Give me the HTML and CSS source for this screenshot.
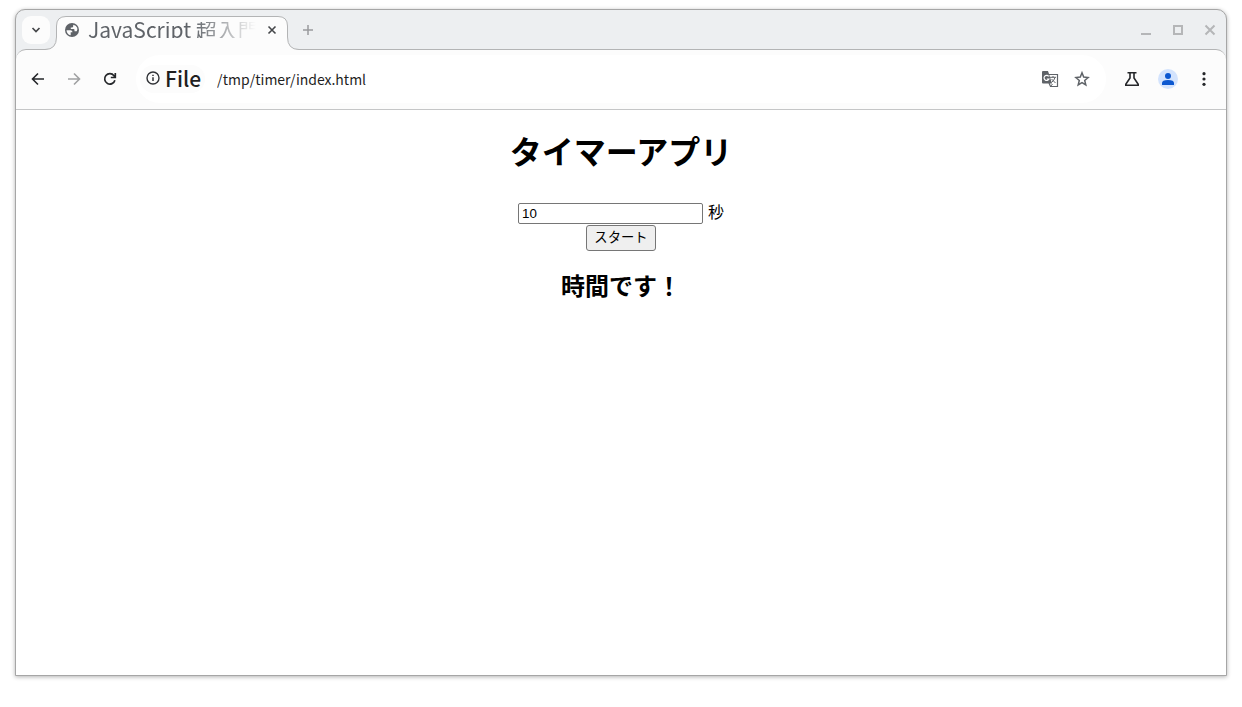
FILE: index.html
```html
<!DOCTYPE html>
<html lang="ja">
<head>
<meta charset="utf-8">
<title>JavaScript 超入門</title>
<link rel="stylesheet" href="styles.css">
</head>
<body>
<div class="window">
  <header class="tabstrip">
    <button class="tab-search" type="button" aria-label="タブを検索">
      <svg width="10" height="8" viewBox="0 0 10 8"><path d="M1.500 2 5 5.500 8.500 2" fill="none" stroke="#45474a" stroke-width="1.700"/></svg>
    </button>
    <div class="tab">
      <svg class="tab-shape" width="256" height="35" viewBox="0 0 256 35"><path d="M0 35V33.500H1Q12.500 33.500 12.500 21V10Q12.500 .5 22 .5H234Q243.500 .5 243.500 10V21Q243.500 33.500 255 33.500H256V35Z" fill="#fcfcfc"/><path d="M0 33.500H1Q12.500 33.500 12.500 21V10Q12.500 .5 22 .5H234Q243.500 .5 243.500 10V21Q243.500 33.500 255 33.500H256" fill="none" stroke="#b3b4b5"/></svg>
      <svg class="globe" width="16" height="16" viewBox="0 0 16 16"><circle cx="8" cy="8" r="7" fill="#5f6368"/><path d="M2.500 8.200H6.500Q8.500 8.200 8.500 10.200H6.700V13.300Q2.700 12.300 2.500 8.200ZM9.200 2.700V4.200Q9.200 5.500 7.800 5.500H6.800V7H9.600Q10.500 7 10.500 8V9.300H12.700Q13.800 7.500 13.200 5.700Q12.200 3.300 9.200 2.700Z" fill="#fcfcfc"/></svg>
      <span class="tab-title">JavaScript 超入門</span>
      <button class="tab-close" type="button" aria-label="タブを閉じる">
        <svg width="10" height="10" viewBox="0 0 10 10"><path d="m1.500 1.500 7 7m0-7-7 7" stroke="#45474a" stroke-width="1.600"/></svg>
      </button>
    </div>
    <button class="new-tab" type="button" aria-label="新しいタブ">
      <svg width="12" height="12" viewBox="0 0 12 12"><path d="M6 1v10M1 6h10" stroke="#999b9d" stroke-width="1.500"/></svg>
    </button>
    <div class="window-controls">
      <button type="button" aria-label="最小化"><svg width="12" height="12" viewBox="0 0 12 12"><path d="M1 10h10" stroke="#b5b6b8" stroke-width="2"/></svg></button>
      <button type="button" aria-label="最大化"><svg width="12" height="12" viewBox="0 0 12 12"><path d="M2 2h8v8H2z" fill="none" stroke="#b5b6b8" stroke-width="2"/></svg></button>
      <button type="button" aria-label="閉じる"><svg width="12" height="12" viewBox="0 0 12 12"><path d="m1.500 1.500 9 9m0-9-9 9" stroke="#b5b6b8" stroke-width="2"/></svg></button>
    </div>
  </header>
  <nav class="toolbar">
    <div class="nav-buttons">
      <button type="button" aria-label="戻る"><svg width="16" height="16" viewBox="0 0 16 16"><path d="M14 8H3M8 2.500 2.500 8 8 13.500" fill="none" stroke="#25272a" stroke-width="1.600"/></svg></button>
      <button type="button" aria-label="進む"><svg width="16" height="16" viewBox="0 0 16 16"><path d="M2 8h11M8 2.500 13.500 8 8 13.500" fill="none" stroke="#a0a1a2" stroke-width="1.600"/></svg></button>
      <button type="button" aria-label="再読み込み"><svg width="16" height="16" viewBox="0 0 16 16"><path d="M12.900 9.200A5.200 5.200 0 1 1 12 4.700L13.300 6.200M13.300 2v4.500H8.800" fill="none" stroke="#25272a" stroke-width="1.700"/></svg></button>
    </div>
    <div class="address-bar">
      <button class="site-info" type="button">
        <svg width="16" height="16" viewBox="0 0 16 16"><circle cx="8" cy="8" r="6" fill="none" stroke="#303236" stroke-width="1.400"/><path d="M8 7.200V11M8 4.700v1.400" stroke="#303236" stroke-width="1.500"/></svg>
        <span>File</span>
      </button>
      <input class="url" type="text" value="/tmp/timer/index.html" aria-label="アドレス">
      <button type="button" aria-label="翻訳"><svg width="18" height="18" viewBox="0 0 18 18"><path d="M7.500 4.500h9v12H9.500L8 13" fill="#fff" stroke="#5f6368" stroke-width="1.200"/><path d="M2 1h5l1 3 3 9.500H2a1 1 0 0 1-1-1V2a1 1 0 0 1 1-1Z" fill="#5f6368"/><path d="M7.700 6.300A2.600 2.600 0 1 0 8 9H5.800" fill="none" stroke="#fff" stroke-width="1.200"/><path d="M9 7.300h6M12 6v1.300M14 7.500q-.8 3-3.500 5M10.500 9l4 4M9.500 16.500l2-2.500" fill="none" stroke="#5f6368" stroke-width="1"/></svg></button>
      <button type="button" aria-label="ブックマーク"><svg width="18" height="18" viewBox="0 0 18 18"><path d="m9 2.800 1.700 4.300 4.400.4-3.400 3 1.100 4.400L9 12.600l-3.800 2.300 1.100-4.400-3.400-3 4.400-.4Z" fill="none" stroke="#5f6368" stroke-width="1.500"/></svg></button>
    </div>
    <div class="actions">
      <button type="button" aria-label="試験運用機能"><svg width="16" height="16" viewBox="0 0 16 16"><path d="M3.500 1.800h9M6 2v5L1.800 13.200v1h12.400v-1L10 7V2" fill="none" stroke="#25272a" stroke-width="1.600"/></svg></button>
      <button type="button" aria-label="プロフィール"><svg width="20" height="20" viewBox="0 0 20 20"><circle cx="10" cy="10" r="10" fill="#d3e3fd"/><circle cx="10" cy="7" r="3" fill="#0b57d0"/><path d="M4 16v-2q0-3 6-3t6 3v2Z" fill="#0b57d0"/></svg></button>
      <button type="button" aria-label="メニュー"><svg width="16" height="16" viewBox="0 0 16 16" fill="#25272a"><circle cx="8" cy="2.700" r="1.600"/><circle cx="8" cy="8" r="1.600"/><circle cx="8" cy="13.300" r="1.600"/></svg></button>
    </div>
  </nav>
  <main class="page">
    <h1>タイマーアプリ</h1>
    <form class="timer">
      <div class="field"><input class="seconds" id="seconds" type="text" value="10"><label for="seconds">秒</label></div>
      <button class="start" type="button">スタート</button>
    </form>
    <h2>時間です！</h2>
  </main>
</div>
</body>
</html>
```
FILE: styles.css
```css
* {
  box-sizing: border-box;
}

body {
  margin: 0;
  min-height: 100vh;
  padding: 9px 15px 31px;
  display: flex;
  background: #fff;
  color: #000;
  font-family: "Noto Sans CJK JP", sans-serif;
}

svg {
  display: block;
  flex: none;
}

.window {
  flex: 1;
  min-width: 0;
  display: flex;
  flex-direction: column;
  background: #edeff1;
  border: 1px solid #a6a6a6;
  border-radius: 10px 10px 0 0;
  box-shadow: 0 1px 4px rgba(0, 0, 0, 0.3);
}

.tabstrip button,
.toolbar button {
  display: flex;
  align-items: center;
  justify-content: center;
  border: 0;
  padding: 0;
  background: none;
  font-family: inherit;
}

.tabstrip {
  height: 39px;
  display: flex;
  align-items: center;
  padding: 0 6px;
}

.tabstrip .tab-search {
  width: 28px;
  height: 28px;
  border-radius: 9px;
  background: #fcfcfc;
}

.tab {
  position: relative;
  z-index: 1;
  width: 232px;
  height: 28px;
  margin-left: 6px;
  padding: 0 8px;
  display: flex;
  align-items: center;
}

.tab-shape {
  position: absolute;
  left: -12px;
  top: 0;
}

.globe,
.tab-title,
.tabstrip .tab-close {
  position: relative;
}

.tab-title {
  flex: 1;
  height: 16px;
  margin: 0 8px;
  overflow: hidden;
  white-space: nowrap;
  color: #5f6368;
  font-size: 21px;
  line-height: 14px;
  mask-image: linear-gradient(to right, #000 62%, transparent 100%);
}

.tabstrip .tab-close {
  width: 16px;
  height: 16px;
}

.tabstrip .new-tab {
  width: 28px;
  height: 28px;
  margin-left: 6px;
}

.window-controls {
  display: flex;
  gap: 20px;
  margin-left: auto;
  padding-right: 4px;
}

.toolbar {
  height: 61px;
  display: flex;
  align-items: center;
  padding: 0 14px 2px;
  background: #fcfcfc;
  border-top: 1px solid #b3b4b5;
  border-bottom: 1px solid #c5c6c7;
  border-radius: 10px 10px 0 0;
}

.nav-buttons {
  display: flex;
  gap: 20px;
}

.address-bar {
  flex: 1;
  min-width: 0;
  height: 48px;
  display: flex;
  align-items: center;
  gap: 14px;
  margin: 0 18px;
  padding: 0 15px 0 4px;
  border-radius: 24px;
  background: #fff;
}

.toolbar .site-info {
  height: 28px;
  gap: 4px;
  margin-right: -2px;
  padding: 0 4px 2px 5px;
  border-radius: 14px;
  background: #fcfcfc;
  color: #1f1f1f;
  font-size: 21px;
  font-weight: 500;
}

.url {
  flex: 1;
  min-width: 0;
  padding: 0;
  border: 0;
  background: none;
  color: #1f1f1f;
  font-family: "Noto Sans CJK JP", sans-serif;
  font-size: 14px;
}

.actions {
  display: flex;
  align-items: center;
  gap: 18px;
}

.page {
  flex: 1;
  background: #fff;
  text-align: center;
}

h1 {
  margin: 18px 0 30px;
  font-size: 32px;
  line-height: 44px;
}

h2 {
  margin: 16px 0;
  font-size: 24px;
  line-height: 36px;
}

.timer {
  display: flex;
  flex-direction: column;
  align-items: center;
}

.field {
  display: flex;
  align-items: center;
  gap: 5px;
  height: 23px;
  font-size: 16px;
  line-height: 20px;
}

.field label {
  padding-bottom: 5px;
}

.seconds {
  width: 185px;
  height: 21px;
  padding: 1px 3px;
  border: 1px solid #767676;
  border-radius: 2px;
  font-family: "Liberation Sans", sans-serif;
}

.start {
  width: 70px;
  height: 26px;
  padding: 0 0 2px;
  border: 1px solid #767676;
  border-radius: 3px;
  background: #efefef;
  color: #000;
  font-family: inherit;
  line-height: 20px;
}
```
